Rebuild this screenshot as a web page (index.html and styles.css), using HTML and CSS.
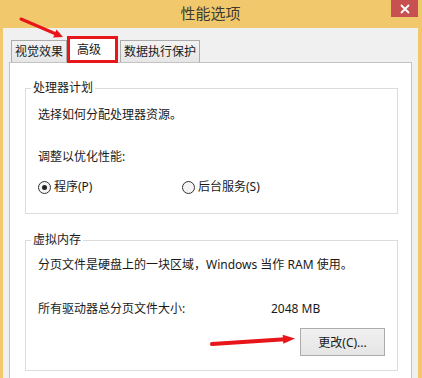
FILE: index.html
```html
<!DOCTYPE html>
<html lang="zh-CN">
<head>
    <meta charset="UTF-8">
    <meta name="viewport" content="width=device-width, initial-scale=1.0">
    <title>性能选项</title>
    <link rel="stylesheet" href="styles.css">
</head>
<body>
    <div class="window">
        <div class="titlebar">
            <span></span>
            <div class="title">性能选项</div>
            <div class="close">
                <svg width="10" height="10" viewBox="0 0 10 10">
                    <path d="M1 1 L9 9 M9 1 L1 9" stroke="#fff" stroke-width="1.8" fill="none"/>
                </svg>
            </div>
        </div>

        <div class="client">
            <div class="tabs">
                <div class="tab">视觉效果</div>
                <div class="tab active">高级</div>
                <div class="tab">数据执行保护</div>
            </div>

            <div class="panel">
                <fieldset class="group">
                    <legend>处理器计划</legend>
                    <div class="group-body cpu">
                        <p>选择如何分配处理器资源。</p>
                        <p class="gap-lg">调整以优化性能:</p>
                        <div class="radios">
                            <label class="radio checked"><span class="dot"></span>程序(P)</label>
                            <label class="radio"><span class="dot"></span>后台服务(S)</label>
                        </div>
                    </div>
                </fieldset>

                <fieldset class="group memory">
                    <legend>虚拟内存</legend>
                    <div class="group-body mem">
                        <p>分页文件是硬盘上的一块区域，Windows 当作 RAM 使用。</p>
                        <div class="size-row">
                            <span class="size-label">所有驱动器总分页文件大小:</span>
                            <span>2048 MB</span>
                        </div>
                        <div class="button-row">
                            <button>更改(C)...</button>
                        </div>
                    </div>
                </fieldset>
            </div>
        </div>

        <!-- red annotation arrows drawn over the dialog -->
        <svg class="marks" width="422" height="378" viewBox="0 0 422 378">
            <line x1="21" y1="19" x2="56" y2="34" stroke="#e8151b" stroke-width="3" stroke-linecap="round"/>
            <polygon points="63,37 53.1,37.4 56.5,29.6" fill="#e8151b"/>
            <line x1="212" y1="344" x2="285" y2="339.3" stroke="#e8151b" stroke-width="4" stroke-linecap="round"/>
            <polygon points="295,338.5 283.3,343.8 282.7,334.8" fill="#e8151b"/>
        </svg>
    </div>
</body>
</html>
```

FILE: styles.css
```css
body {
    margin: 0;
    font-family: "Noto Sans", "Noto Sans CJK SC", sans-serif;
    font-size: 12px;
    color: #1a1a1a;
}
.window {
    position: relative;
    width: 422px;
    height: 378px;
    box-sizing: border-box;
    padding: 0 4px 0 3px;
    background: #f1c96c;
    overflow: hidden;
}
.titlebar {
    display: grid;
    grid-template-columns: 1fr auto 1fr;
    height: 28px;
}
.title {
    font-size: 15px;
    line-height: 26px;
    color: #3e3a30;
}
.close {
    justify-self: end;
    width: 27px;
    height: 17px;
    background: #c75050;
    display: flex;
    align-items: center;
    justify-content: center;
}
.client {
    height: 350px;
    box-sizing: border-box;
    padding: 8px 6px 0;
    background: #f0f0f0;
}
.tabs {
    display: flex;
    align-items: flex-end;
    padding-left: 2px;
    margin-bottom: -1px;
    position: relative;
    z-index: 1;
}
.tab {
    height: 21px;
    line-height: 21px;
    padding: 0 3px;
    margin-bottom: 1px;
    border: 1px solid #acacac;
    border-bottom: none;
    background: linear-gradient(#f2f2f2, #e6e6e6);
    white-space: nowrap;
}
.tab.active {
    height: 21px;
    padding: 0 14px 0 7px;
    margin: 0 2px 0 0;
    border: 3px solid #e8151b;
    background: #fff;
}
.panel {
    height: 330px;
    box-sizing: border-box;
    padding: 17px 13px 0 15px;
    background: #fff;
    border: 1px solid #c3c3c3;
}
.group {
    margin: 0;
    padding: 0;
    min-width: 0;
    border: 1px solid #dcdcdc;
}
.group legend {
    margin-left: 5px;
    padding: 0 2px;
    line-height: 16px;
}
.group.memory {
    margin-top: 18px;
}
.group-body p {
    margin: 0;
    line-height: 16px;
}
.group-body.cpu {
    padding: 11px 12px 18px;
}
.group-body.mem {
    padding: 9px 12px 14px;
}
.gap-lg {
    margin-top: 26px !important;
}
.radios {
    display: flex;
    margin-top: 14px;
    line-height: 16px;
}
.radio {
    display: flex;
    align-items: center;
    width: 144px;
}
.dot {
    width: 11px;
    height: 11px;
    margin-right: 3px;
    border: 1px solid #333;
    border-radius: 50%;
    background: #f4f4f4;
    display: flex;
    align-items: center;
    justify-content: center;
}
.radio.checked .dot::after {
    content: "";
    width: 5px;
    height: 5px;
    border-radius: 50%;
    background: #222;
}
.size-row {
    display: flex;
    margin-top: 28px;
    line-height: 16px;
}
.size-label {
    width: 233px;
}
.button-row {
    display: flex;
    justify-content: flex-end;
    margin-top: 11px;
}
button {
    width: 85px;
    height: 28px;
    font-family: inherit;
    font-size: 12px;
    color: #1a1a1a;
    border: 1px solid #acacac;
    border-radius: 0;
    background: linear-gradient(#f0f0f0, #e5e5e5);
}
.marks {
    position: absolute;
    top: 0;
    left: 0;
    pointer-events: none;
}
```
